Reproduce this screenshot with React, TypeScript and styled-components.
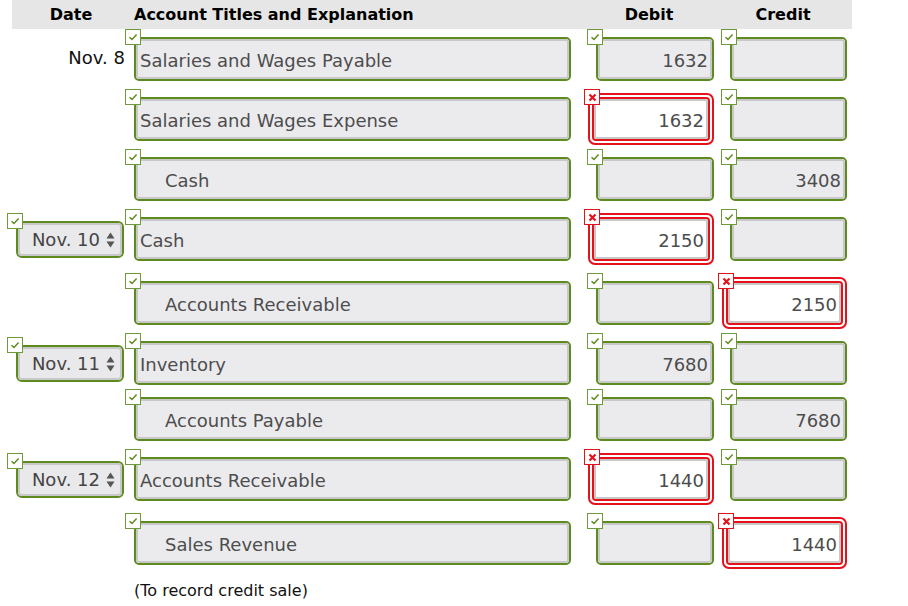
import styled, { createGlobalStyle } from 'styled-components'

type Mark = 'ok' | 'bad'

type Entry = {
  date?: string
  select?: boolean
  account: string
  indent?: boolean
  debit?: string
  credit?: string
  debitMark?: Mark
  creditMark?: Mark
  space: number
}

const entries: Entry[] = [
  { date: 'Nov. 8', account: 'Salaries and Wages Payable', debit: '1632', space: 8 },
  { account: 'Salaries and Wages Expense', debit: '1632', debitMark: 'bad', space: 8 },
  { account: 'Cash', indent: true, credit: '3408', space: 8 },
  { date: 'Nov. 10', select: true, account: 'Cash', debit: '2150', debitMark: 'bad', space: 12 },
  { account: 'Accounts Receivable', indent: true, credit: '2150', creditMark: 'bad', space: 8 },
  { date: 'Nov. 11', select: true, account: 'Inventory', debit: '7680', space: 4 },
  { account: 'Accounts Payable', indent: true, credit: '7680', space: 8 },
  { date: 'Nov. 12', select: true, account: 'Accounts Receivable', debit: '1440', debitMark: 'bad', space: 12 },
  { account: 'Sales Revenue', indent: true, credit: '1440', creditMark: 'bad', space: 8 },
]

const GREEN = '#5e8b1f'
const RED = '#e3121b'

const GlobalStyle = createGlobalStyle`
  body {
    margin: 0;
    background: #fff;
    font-family: "DejaVu Sans", Verdana, sans-serif;
  }
`

const Sheet = styled.div`
  width: 840px;
  margin-left: 12px;
`

const Header = styled.div`
  display: grid;
  grid-template-columns: 122px 437px 143px 133px 5px;
  height: 29px;
  align-items: center;
  background: #e6e6e6;
  font-weight: bold;
  font-size: 16px;
  color: #000;
`

const HeadCell = styled.div<{ $pad?: number; $align?: string }>`
  text-align: ${(p) => p.$align || 'center'};
  padding-left: ${(p) => p.$pad || 0}px;
  padding-right: ${(p) => (p.$align ? 0 : 4)}px;
  white-space: nowrap;
`

const Row = styled.div<{ $space: number }>`
  display: grid;
  grid-template-columns: 122px 437px 143px 133px;
  grid-template-rows: 44px;
  align-items: center;
  padding: 8px 0 ${(p) => p.$space}px;
`

const DateText = styled.div`
  text-align: right;
  padding-right: 9px;
  margin-top: -4px;
  font-size: 18px;
  color: #111;
`

const AmountCell = styled.div`
  display: flex;
  justify-content: flex-end;
  align-items: center;
  height: 44px;
`

const Frame = styled.div<{ $w: number }>`
  position: relative;
  box-sizing: border-box;
  width: ${(p) => p.$w}px;
  height: 44px;
  border: 2px solid ${GREEN};
  border-radius: 5px;
`

const BadFrame = styled.div<{ $w: number }>`
  position: relative;
  box-sizing: border-box;
  width: ${(p) => p.$w + 8}px;
  height: 52px;
  padding: 2px;
  border: 2px solid ${RED};
  border-radius: 7px;
  background: #fff;
  flex-shrink: 0;
`

const BadInner = styled.div`
  box-sizing: border-box;
  height: 100%;
  border: 2px solid ${RED};
  border-radius: 4px;
`

const Field = styled.div<{ $indent?: boolean; $num?: boolean; $white?: boolean }>`
  box-sizing: border-box;
  height: 100%;
  border: 2px solid #c8c8c8;
  border-radius: 3px;
  background: ${(p) => (p.$white ? '#fff' : '#ebebed')};
  display: flex;
  align-items: center;
  justify-content: ${(p) => (p.$num ? 'flex-end' : 'flex-start')};
  padding: 3px 2px 0 ${(p) => (p.$indent ? 27 : 2)}px;
  font-size: 18px;
  color: #4d4d4d;
  white-space: nowrap;
`

const Badge = styled.div<{ $bad?: boolean; $top: number; $left: number }>`
  position: absolute;
  top: ${(p) => p.$top}px;
  left: ${(p) => p.$left}px;
  box-sizing: border-box;
  width: 16px;
  height: 16px;
  background: #fff;
  border: 1px solid ${(p) => (p.$bad ? RED : '#6f9a3a')};
  display: flex;
  align-items: center;
  justify-content: center;
  z-index: 2;
`

const SelectBox = styled.div`
  position: relative;
  box-sizing: border-box;
  width: 108px;
  height: 37px;
  margin-left: 4px;
  border: 2px solid ${GREEN};
  border-radius: 6px;
`

const SelectInner = styled.div`
  box-sizing: border-box;
  height: 100%;
  border: 2px solid #c8c8c8;
  border-radius: 4px;
  background: #e9e9eb;
  display: flex;
  align-items: center;
  justify-content: flex-end;
  gap: 6px;
  padding: 1px 5px 0 0;
  font-size: 18px;
  color: #444;
  white-space: nowrap;
`

const Note = styled.div`
  margin: 8px 0 0 122px;
  font-size: 16px;
  color: #111;
`

const Check = () => (
  <svg width="10" height="8" viewBox="0 0 10 8">
    <path d="M1.5 4.2 L4 6.4 L8.6 1.6" fill="none" stroke="#5e8b1f" strokeWidth="1.5" />
  </svg>
)

const Cross = () => (
  <svg width="9" height="9" viewBox="0 0 9 9">
    <path d="M1.5 1.5 L7.5 7.5 M7.5 1.5 L1.5 7.5" stroke={RED} strokeWidth="2.2" />
  </svg>
)

const Arrows = () => (
  <svg width="9" height="16" viewBox="0 0 9 16">
    <path d="M4.5 0.5 L8.5 6.5 L0.5 6.5 Z" fill="#555" />
    <path d="M4.5 15.5 L8.5 9.5 L0.5 9.5 Z" fill="#555" />
  </svg>
)

const Box = ({
  width,
  value,
  mark,
  indent,
  num,
}: {
  width: number
  value?: string
  mark?: Mark
  indent?: boolean
  num?: boolean
}) =>
  mark === 'bad' ? (
    <BadFrame $w={width}>
      <Badge $bad $top={-6} $left={-6}>
        <Cross />
      </Badge>
      <BadInner>
        <Field $num={num} $white>
          {value}
        </Field>
      </BadInner>
    </BadFrame>
  ) : (
    <Frame $w={width}>
      <Badge $top={-10} $left={-11}>
        <Check />
      </Badge>
      <Field $num={num} $indent={indent}>
        {value}
      </Field>
    </Frame>
  )

const App = () => {
  return (
    <Sheet>
      <GlobalStyle />
      <Header>
        <HeadCell>Date</HeadCell>
        <HeadCell $align="left">Account Titles and Explanation</HeadCell>
        <HeadCell $pad={17}>Debit</HeadCell>
        <HeadCell $pad={9}>Credit</HeadCell>
        <div />
      </Header>
      {entries.map((e, i) => (
        <Row key={i} $space={e.space}>
          {e.select ? (
            <SelectBox>
              <Badge $top={-10} $left={-11}>
                <Check />
              </Badge>
              <SelectInner>
                {e.date}
                <Arrows />
              </SelectInner>
            </SelectBox>
          ) : (
            <DateText>{e.date}</DateText>
          )}
          <Box width={437} value={e.account} indent={e.indent} />
          <AmountCell>
            <Box width={118} value={e.debit} mark={e.debitMark} num />
          </AmountCell>
          <AmountCell>
            <Box width={117} value={e.credit} mark={e.creditMark} num />
          </AmountCell>
        </Row>
      ))}
      <Note>(To record credit sale)</Note>
    </Sheet>
  )
}

export default App
